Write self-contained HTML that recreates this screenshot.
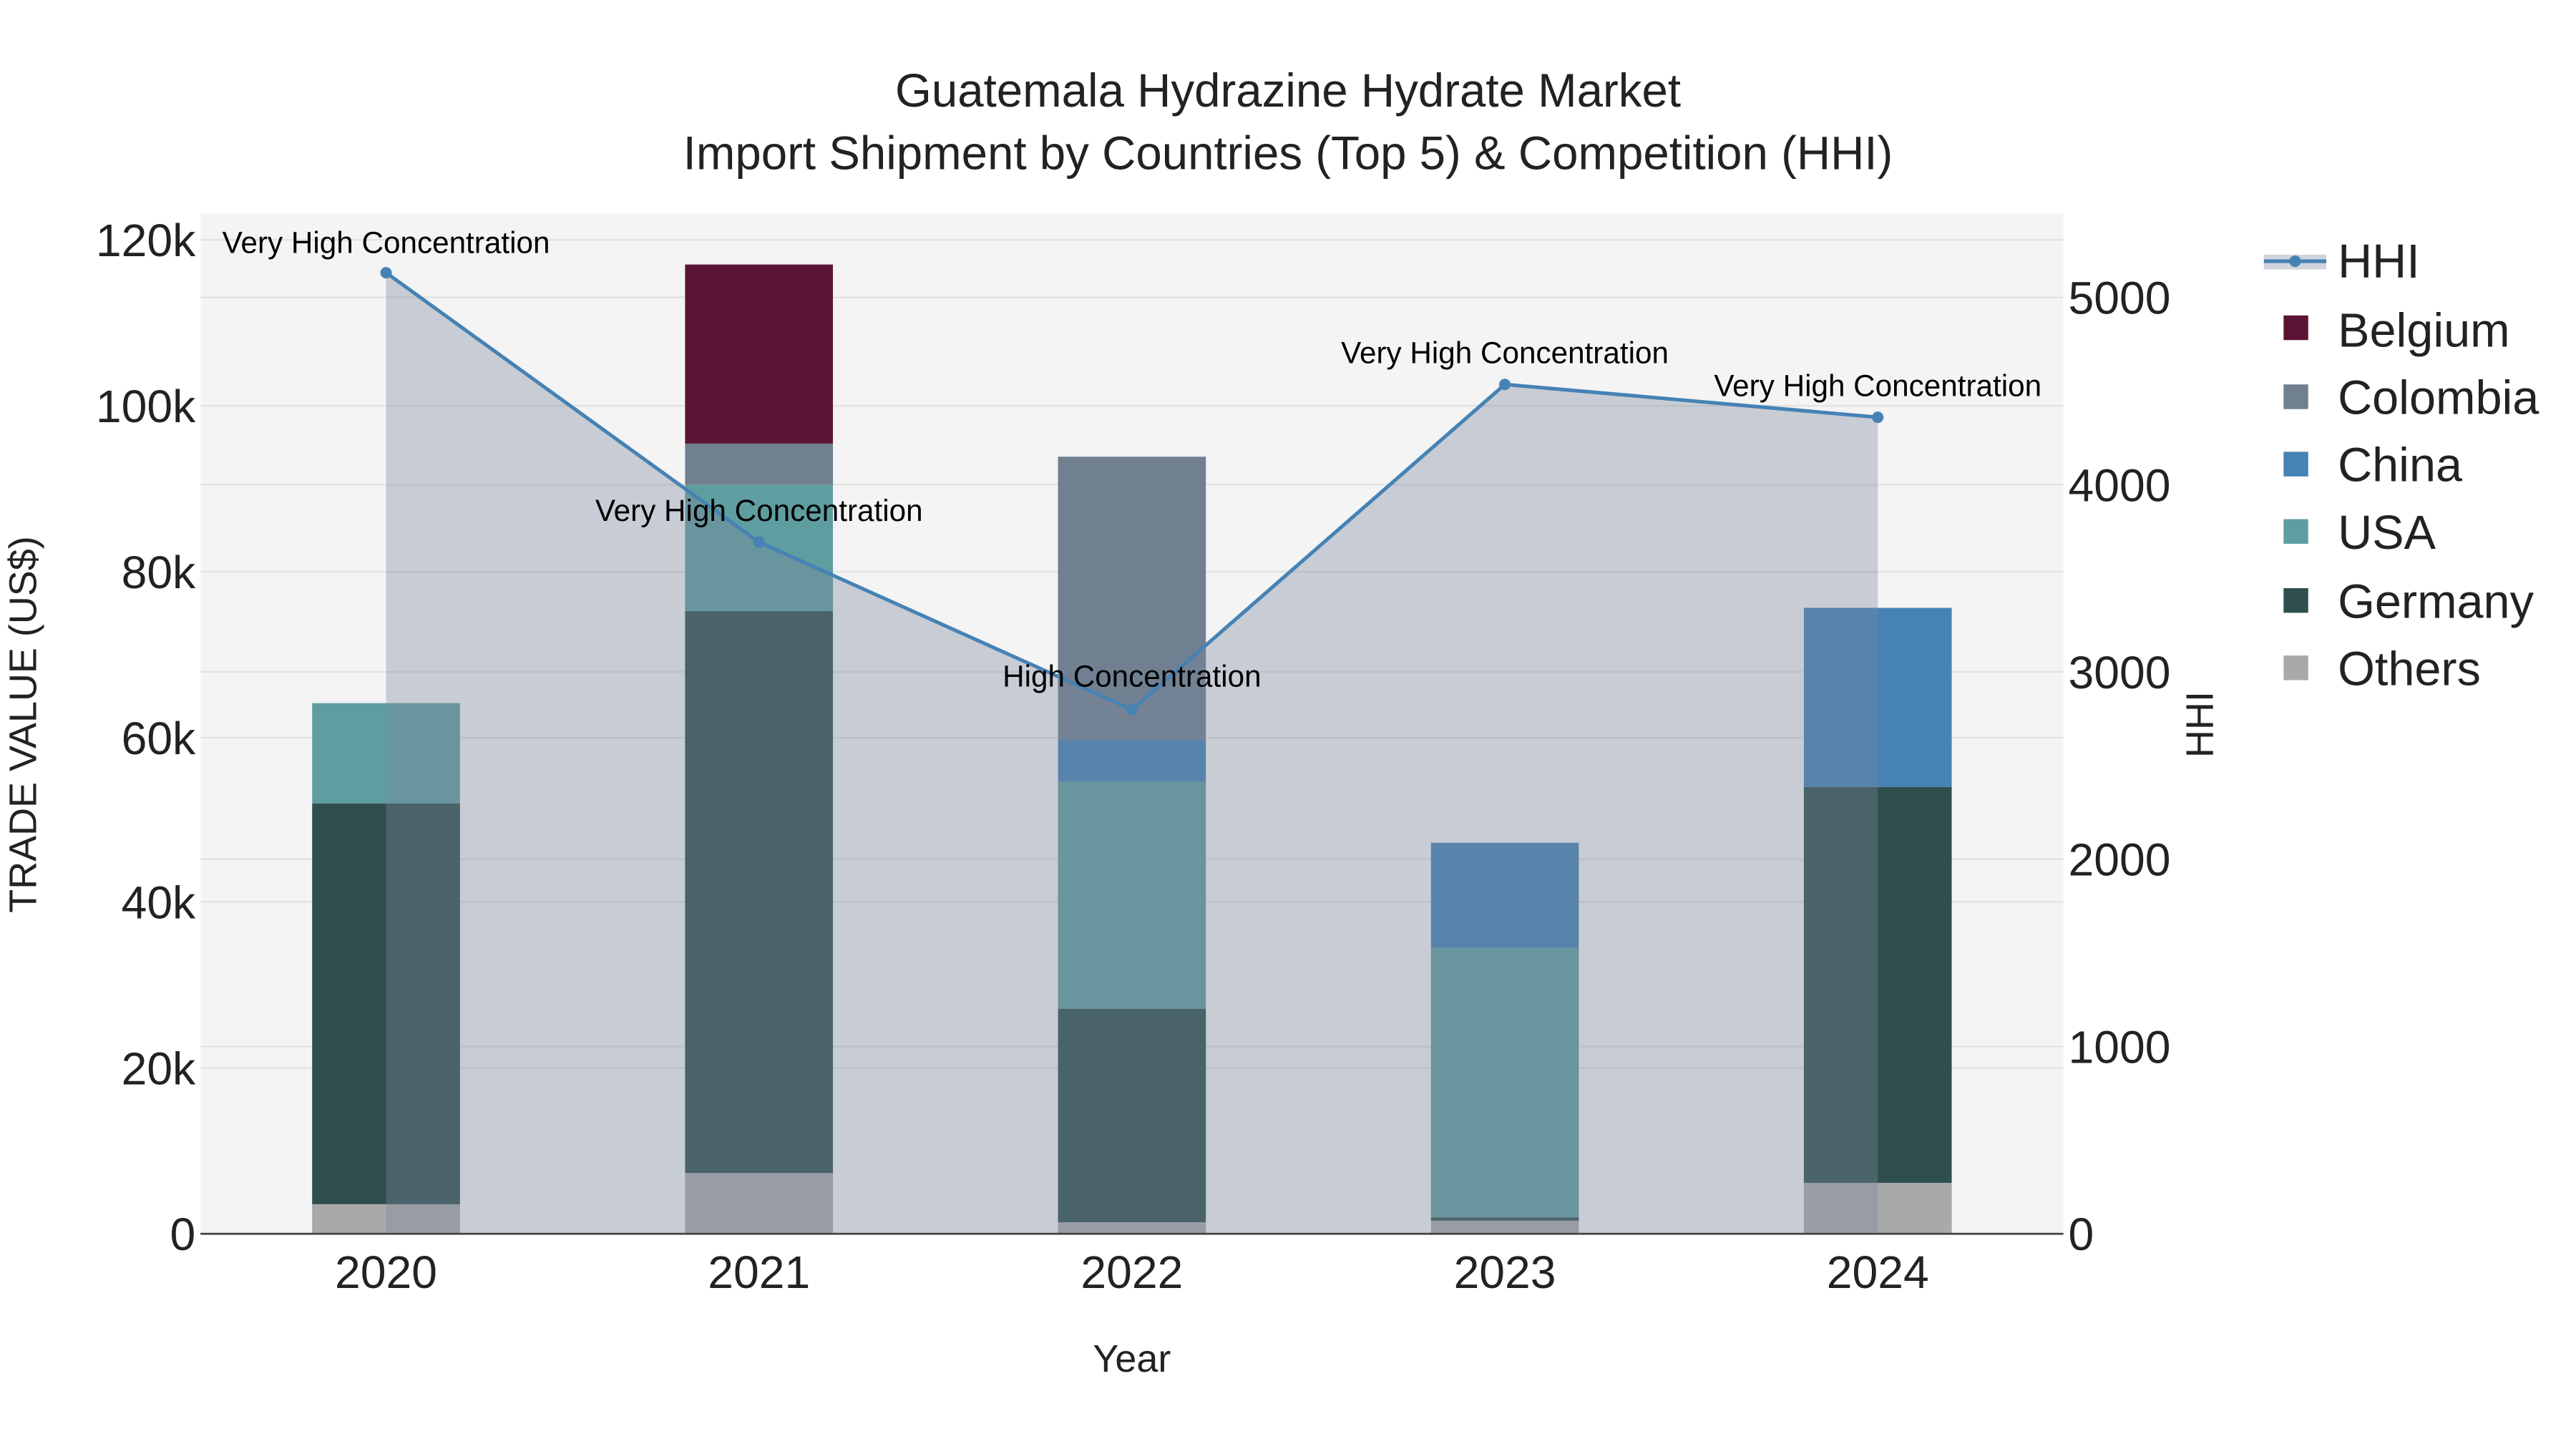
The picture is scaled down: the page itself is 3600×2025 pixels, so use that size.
<!DOCTYPE html>
<html><head><meta charset="utf-8"><style>html,body{margin:0;padding:0;background:#fff}svg{display:block}</style></head><body>
<svg width="3600" height="2025" viewBox="0 0 1568 882" xmlns="http://www.w3.org/2000/svg" font-family="Liberation Sans, sans-serif">
<rect x="0" y="0" width="1568" height="882" fill="#fff"/>
<rect x="122" y="130" width="1134" height="621" fill="#f4f4f4"/>
<g stroke="#e2e2e2" stroke-width="1">
<line x1="122" x2="1256" y1="650" y2="650"/><line x1="122" x2="1256" y1="549" y2="549"/><line x1="122" x2="1256" y1="449" y2="449"/><line x1="122" x2="1256" y1="348" y2="348"/><line x1="122" x2="1256" y1="247" y2="247"/><line x1="122" x2="1256" y1="146" y2="146"/>
<line x1="122" x2="1256" y1="637" y2="637"/><line x1="122" x2="1256" y1="523" y2="523"/><line x1="122" x2="1256" y1="409" y2="409"/><line x1="122" x2="1256" y1="295" y2="295"/><line x1="122" x2="1256" y1="181" y2="181"/>
</g>
<g>
<rect x="190" y="733" width="90" height="18" fill="#a9a9a9"/>
<rect x="190" y="489" width="90" height="244" fill="#2f4f4f"/>
<rect x="190" y="428" width="90" height="61" fill="#5f9ea0"/>

<rect x="417" y="714" width="90" height="37" fill="#a9a9a9"/>
<rect x="417" y="372" width="90" height="342" fill="#2f4f4f"/>
<rect x="417" y="295" width="90" height="77" fill="#5f9ea0"/>
<rect x="417" y="270" width="90" height="25" fill="#708090"/>
<rect x="417" y="161" width="90" height="109" fill="#5c1434"/>

<rect x="644" y="744" width="90" height="7" fill="#a9a9a9"/>
<rect x="644" y="614" width="90" height="130" fill="#2f4f4f"/>
<rect x="644" y="476" width="90" height="138" fill="#5f9ea0"/>
<rect x="644" y="450" width="90" height="26" fill="#4682b4"/>
<rect x="644" y="278" width="90" height="172" fill="#708090"/>

<rect x="871" y="743" width="90" height="8" fill="#a9a9a9"/>
<rect x="871" y="741" width="90" height="2" fill="#2f4f4f"/>
<rect x="871" y="577" width="90" height="164" fill="#5f9ea0"/>
<rect x="871" y="513" width="90" height="64" fill="#4682b4"/>

<rect x="1098" y="720" width="90" height="31" fill="#a9a9a9"/>
<rect x="1098" y="479" width="90" height="241" fill="#2f4f4f"/>
<rect x="1098" y="370" width="90" height="109" fill="#4682b4"/>
</g>
<polygon points="235,751 235,166 462,330 689,432 916,234 1143,254 1143,751" fill="rgb(122,133,155)" fill-opacity="0.36"/>
<line x1="122" x2="1256" y1="751" y2="751" stroke="#444" stroke-width="1.2"/>
<polyline points="235,166 462,330 689,432 916,234 1143,254" fill="none" stroke="#4682b4" stroke-width="2.2"/>
<g fill="#4682b4"><circle cx="235" cy="166" r="3.5"/><circle cx="462" cy="330" r="3.5"/><circle cx="689" cy="432" r="3.5"/><circle cx="916" cy="234" r="3.5"/><circle cx="1143" cy="254" r="3.5"/></g>
<g font-size="18.4" fill="#000" text-anchor="middle">
<text x="235" y="154">Very High Concentration</text>
<text x="462" y="317">Very High Concentration</text>
<text x="689" y="418">High Concentration</text>
<text x="916" y="221">Very High Concentration</text>
<text x="1143" y="241">Very High Concentration</text>
</g>
<g font-size="28" fill="#222" text-anchor="end">
<text x="119" y="761">0</text><text x="119" y="660">20k</text><text x="119" y="559">40k</text><text x="119" y="459">60k</text><text x="119" y="358">80k</text><text x="119" y="257">100k</text><text x="119" y="156">120k</text>
</g>
<g font-size="28" fill="#222">
<text x="1259" y="761">0</text><text x="1259" y="647">1000</text><text x="1259" y="533">2000</text><text x="1259" y="419">3000</text><text x="1259" y="305">4000</text><text x="1259" y="191">5000</text>
</g>
<g font-size="28" fill="#222" text-anchor="middle">
<text x="235" y="784">2020</text><text x="462" y="784">2021</text><text x="689" y="784">2022</text><text x="916" y="784">2023</text><text x="1143" y="784">2024</text>
</g>
<g font-size="28.5" fill="#222" text-anchor="middle">
<text x="784" y="65">Guatemala Hydrazine Hydrate Market</text>
<text x="784" y="103">Import Shipment by Countries (Top 5) &amp; Competition (HHI)</text>
</g>
<text x="689" y="835" font-size="23.5" fill="#222" text-anchor="middle">Year</text>
<text transform="translate(22,441) rotate(-90)" font-size="23.5" fill="#222" text-anchor="middle">TRADE VALUE (US$)</text>
<text transform="translate(1347,441) rotate(-90)" font-size="23.5" fill="#222" text-anchor="middle">HHI</text>
<g>
<rect x="1378" y="155" width="38" height="9" fill="rgb(122,133,155)" fill-opacity="0.36"/>
<line x1="1378" x2="1416" y1="159" y2="159" stroke="#4682b4" stroke-width="2.2"/><circle cx="1397" cy="159" r="3.5" fill="#4682b4"/>
<rect x="1390" y="192" width="15" height="15" fill="#5c1434"/>
<rect x="1390" y="234" width="15" height="15" fill="#708090"/>
<rect x="1390" y="275" width="15" height="15" fill="#4682b4"/>
<rect x="1390" y="316" width="15" height="15" fill="#5f9ea0"/>
<rect x="1390" y="358" width="15" height="15" fill="#2f4f4f"/>
<rect x="1390" y="399" width="15" height="15" fill="#a9a9a9"/>
</g>
<g font-size="29" fill="#222">
<text x="1423" y="169">HHI</text><text x="1423" y="211">Belgium</text><text x="1423" y="252">Colombia</text><text x="1423" y="293">China</text><text x="1423" y="334">USA</text><text x="1423" y="376">Germany</text><text x="1423" y="417">Others</text>
</g>
</svg>
</body></html>
